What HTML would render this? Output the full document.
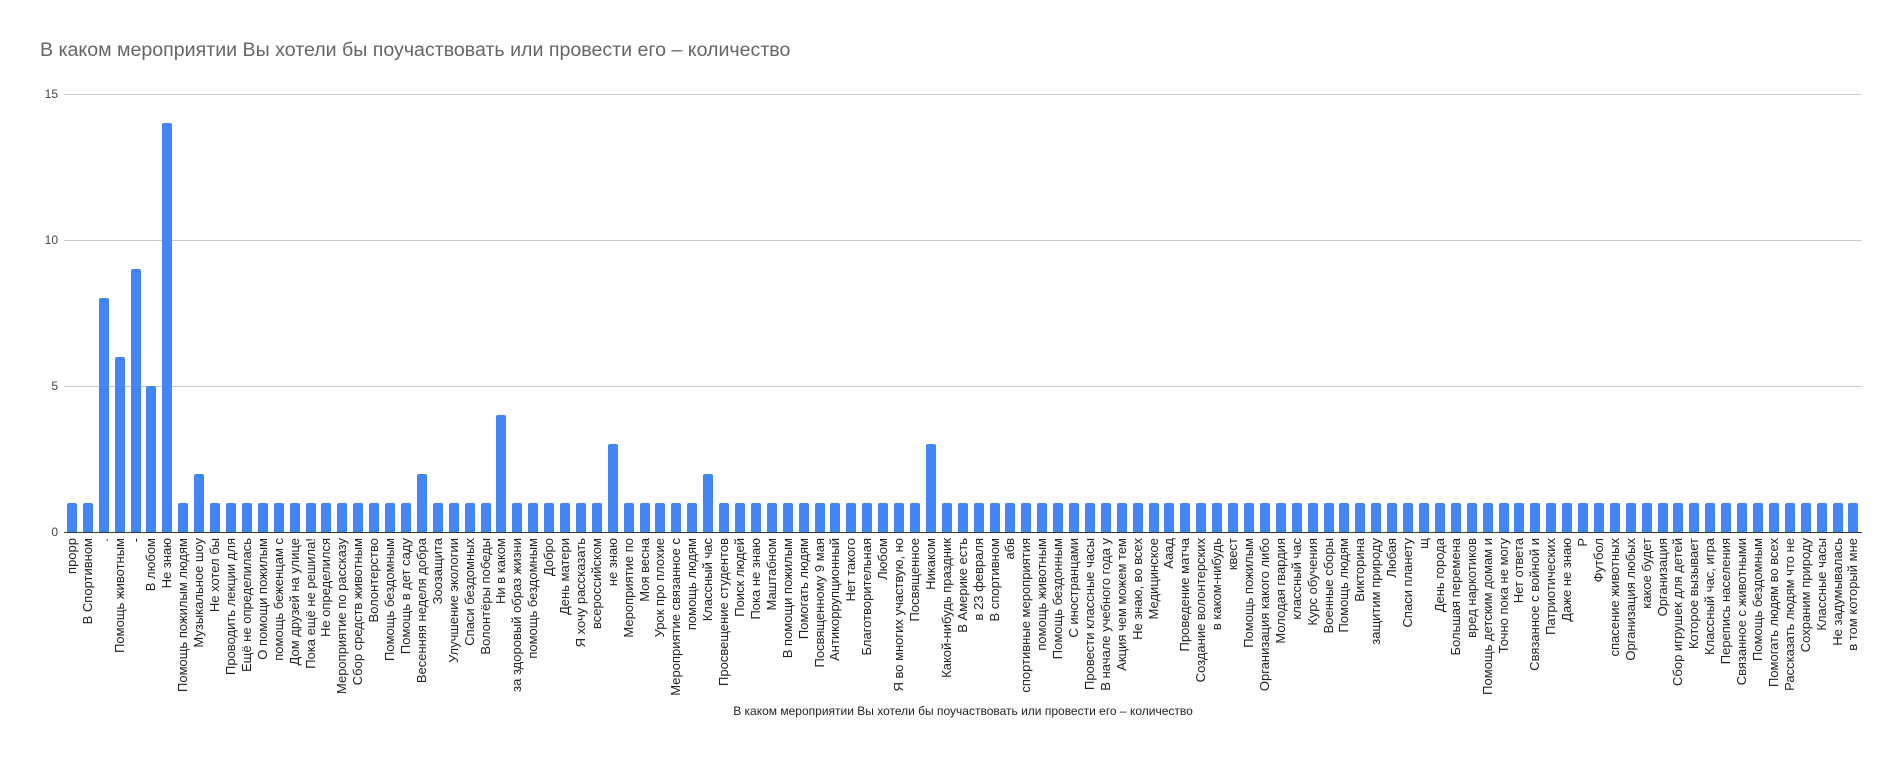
<!DOCTYPE html>
<html><head><meta charset="utf-8"><style>
body{margin:0;width:1900px;height:758px;background:#fff;position:relative;overflow:hidden;font-family:"Liberation Sans",Arial,sans-serif}
.title{position:absolute;left:40px;top:39px;font-size:19.6px;color:#666;white-space:nowrap}
.grid{position:absolute;left:64px;width:1798px;height:1px;background:#ccc}
.yl{position:absolute;width:58px;left:0;text-align:right;font-size:12px;color:#444}
.bars{position:absolute;left:64px;top:94px;width:1798px;height:438px;display:flex}
.bars div{flex:1;display:flex;justify-content:center;align-items:flex-end}
.bars i{display:block;width:10px;background:#4285f4;border-radius:2px 2px 0 0}
.base{position:absolute;left:64px;top:532px;width:1798px;height:1px;background:#333}
.labels{position:absolute;left:64px;top:538px;width:1798px;display:flex}
.labels div{flex:1;display:flex;justify-content:center;align-items:flex-start;min-width:0}
.labels span{writing-mode:vertical-rl;transform:rotate(180deg);font-size:13px;line-height:14px;color:#222;white-space:nowrap}
.xt{position:absolute;left:0;width:1926px;text-align:center;top:704px;font-size:12px;color:#222}
</style></head><body>
<div class="title">В каком мероприятии Вы хотели бы поучаствовать или провести его – количество</div>
<div class="grid" style="top:94px"></div>
<div class="grid" style="top:240px"></div>
<div class="grid" style="top:386px"></div>
<div class="yl" style="top:87px">15</div>
<div class="yl" style="top:233px">10</div>
<div class="yl" style="top:379px">5</div>
<div class="yl" style="top:525px">0</div>
<div class="bars">
<div><i style="height:29px"></i></div><div><i style="height:29px"></i></div><div><i style="height:234px"></i></div><div><i style="height:175px"></i></div><div><i style="height:263px"></i></div><div><i style="height:146px"></i></div><div><i style="height:409px"></i></div><div><i style="height:29px"></i></div><div><i style="height:58px"></i></div>
<div><i style="height:29px"></i></div><div><i style="height:29px"></i></div><div><i style="height:29px"></i></div><div><i style="height:29px"></i></div><div><i style="height:29px"></i></div><div><i style="height:29px"></i></div><div><i style="height:29px"></i></div><div><i style="height:29px"></i></div><div><i style="height:29px"></i></div><div><i style="height:29px"></i></div><div><i style="height:29px"></i></div><div><i style="height:29px"></i></div><div><i style="height:29px"></i></div>
<div><i style="height:58px"></i></div>
<div><i style="height:29px"></i></div><div><i style="height:29px"></i></div><div><i style="height:29px"></i></div><div><i style="height:29px"></i></div>
<div><i style="height:117px"></i></div>
<div><i style="height:29px"></i></div><div><i style="height:29px"></i></div><div><i style="height:29px"></i></div><div><i style="height:29px"></i></div><div><i style="height:29px"></i></div><div><i style="height:29px"></i></div>
<div><i style="height:88px"></i></div>
<div><i style="height:29px"></i></div><div><i style="height:29px"></i></div><div><i style="height:29px"></i></div><div><i style="height:29px"></i></div><div><i style="height:29px"></i></div>
<div><i style="height:58px"></i></div>
<div><i style="height:29px"></i></div><div><i style="height:29px"></i></div><div><i style="height:29px"></i></div><div><i style="height:29px"></i></div><div><i style="height:29px"></i></div><div><i style="height:29px"></i></div><div><i style="height:29px"></i></div><div><i style="height:29px"></i></div><div><i style="height:29px"></i></div><div><i style="height:29px"></i></div><div><i style="height:29px"></i></div><div><i style="height:29px"></i></div><div><i style="height:29px"></i></div>
<div><i style="height:88px"></i></div>
<div><i style="height:29px"></i></div><div><i style="height:29px"></i></div><div><i style="height:29px"></i></div><div><i style="height:29px"></i></div><div><i style="height:29px"></i></div><div><i style="height:29px"></i></div><div><i style="height:29px"></i></div><div><i style="height:29px"></i></div><div><i style="height:29px"></i></div><div><i style="height:29px"></i></div>
<div><i style="height:29px"></i></div><div><i style="height:29px"></i></div><div><i style="height:29px"></i></div><div><i style="height:29px"></i></div><div><i style="height:29px"></i></div><div><i style="height:29px"></i></div><div><i style="height:29px"></i></div><div><i style="height:29px"></i></div><div><i style="height:29px"></i></div><div><i style="height:29px"></i></div>
<div><i style="height:29px"></i></div><div><i style="height:29px"></i></div><div><i style="height:29px"></i></div><div><i style="height:29px"></i></div><div><i style="height:29px"></i></div><div><i style="height:29px"></i></div><div><i style="height:29px"></i></div><div><i style="height:29px"></i></div><div><i style="height:29px"></i></div><div><i style="height:29px"></i></div>
<div><i style="height:29px"></i></div><div><i style="height:29px"></i></div><div><i style="height:29px"></i></div><div><i style="height:29px"></i></div><div><i style="height:29px"></i></div><div><i style="height:29px"></i></div><div><i style="height:29px"></i></div><div><i style="height:29px"></i></div><div><i style="height:29px"></i></div><div><i style="height:29px"></i></div>
<div><i style="height:29px"></i></div><div><i style="height:29px"></i></div><div><i style="height:29px"></i></div><div><i style="height:29px"></i></div><div><i style="height:29px"></i></div><div><i style="height:29px"></i></div><div><i style="height:29px"></i></div><div><i style="height:29px"></i></div><div><i style="height:29px"></i></div><div><i style="height:29px"></i></div>
<div><i style="height:29px"></i></div><div><i style="height:29px"></i></div><div><i style="height:29px"></i></div><div><i style="height:29px"></i></div><div><i style="height:29px"></i></div><div><i style="height:29px"></i></div><div><i style="height:29px"></i></div><div><i style="height:29px"></i></div>
</div>
<div class="base"></div>
<div class="labels">
<div><span>прорр</span></div><div><span>В Спортивном</span></div><div><span>.</span></div><div><span>Помощь животным</span></div><div><span>-</span></div><div><span>В любом</span></div><div><span>Не знаю</span></div><div><span>Помощь пожилым людям</span></div><div><span>Музыкальное шоу</span></div><div><span>Не хотел бы</span></div>
<div><span>Проводить лекции для</span></div><div><span>Ещё не определилась</span></div><div><span>О помощи пожилым</span></div><div><span>помощь беженцам с</span></div><div><span>Дом друзей на улице</span></div><div><span>Пока ещё не решила!</span></div><div><span>Не определился</span></div><div><span>Мероприятие по рассказу</span></div><div><span>Сбор средств животным</span></div><div><span>Волонтерство</span></div>
<div><span>Помощь бездомным</span></div><div><span>Помощь в дет саду</span></div><div><span>Весенняя неделя добра</span></div><div><span>Зоозащита</span></div><div><span>Улучшение экологии</span></div><div><span>Спаси бездомных</span></div><div><span>Волонтёры победы</span></div><div><span>Ни в каком</span></div><div><span>за здоровый образ жизни</span></div><div><span>помощь бездомным</span></div>
<div><span>Добро</span></div><div><span>День матери</span></div><div><span>Я хочу рассказать</span></div><div><span>всероссийском</span></div><div><span>не знаю</span></div><div><span>Мероприятие по</span></div><div><span>Моя весна</span></div><div><span>Урок про плохие</span></div><div><span>Мероприятие связанное с</span></div><div><span>помощь людям</span></div>
<div><span>Классный час</span></div><div><span>Просвещение студентов</span></div><div><span>Поиск людей</span></div><div><span>Пока не знаю</span></div><div><span>Маштабном</span></div><div><span>В помощи пожилым</span></div><div><span>Помогать людям</span></div><div><span>Посвященному 9 мая</span></div><div><span>Антикоррупционный</span></div><div><span>Нет такого</span></div>
<div><span>Благотворительная</span></div><div><span>Любом</span></div><div><span>Я во многих участвую, но</span></div><div><span>Посвященное</span></div><div><span>Никаком</span></div><div><span>Какой-нибудь праздник</span></div><div><span>В Америке есть</span></div><div><span>в 23 февраля</span></div><div><span>В спортивном</span></div><div><span>абв</span></div>
<div><span>спортивные мероприятия</span></div><div><span>помощь животным</span></div><div><span>Помощь бездонным</span></div><div><span>С иностранцами</span></div><div><span>Провести классные часы</span></div><div><span>В начале учебного года у</span></div><div><span>Акция чем можем тем</span></div><div><span>Не знаю, во всех</span></div><div><span>Медицинское</span></div><div><span>Аaaд</span></div>
<div><span>Проведение матча</span></div><div><span>Создание волонтерских</span></div><div><span>в каком-нибудь</span></div><div><span>квест</span></div><div><span>Помощь пожилым</span></div><div><span>Организация какого либо</span></div><div><span>Молодая гвардия</span></div><div><span>классный час</span></div><div><span>Курс обучения</span></div><div><span>Военные сборы</span></div>
<div><span>Помощь людям</span></div><div><span>Викторина</span></div><div><span>защитим природу</span></div><div><span>Любая</span></div><div><span>Спаси планету</span></div><div><span>щ</span></div><div><span>День города</span></div><div><span>Большая перемена</span></div><div><span>вред наркотиков</span></div><div><span>Помощь детским домам и</span></div>
<div><span>Точно пока не могу</span></div><div><span>Нет ответа</span></div><div><span>Связанное с войной и</span></div><div><span>Патриотических</span></div><div><span>Даже не знаю</span></div><div><span>Р</span></div><div><span>Футбол</span></div><div><span>спасение животных</span></div><div><span>Организация любых</span></div><div><span>какое будет</span></div>
<div><span>Организация</span></div><div><span>Сбор игрушек для детей</span></div><div><span>Которое вызывает</span></div><div><span>Классный час, игра</span></div><div><span>Перепись населения</span></div><div><span>Связанное с животными</span></div><div><span>Помощь бездомным</span></div><div><span>Помогать людям во всех</span></div><div><span>Рассказать людям что не</span></div><div><span>Сохраним природу</span></div>
<div><span>Классные часы</span></div><div><span>Не задумывалась</span></div><div><span>в том который мне</span></div>
</div>
<div class="xt">В каком мероприятии Вы хотели бы поучаствовать или провести его – количество</div>
</body></html>
